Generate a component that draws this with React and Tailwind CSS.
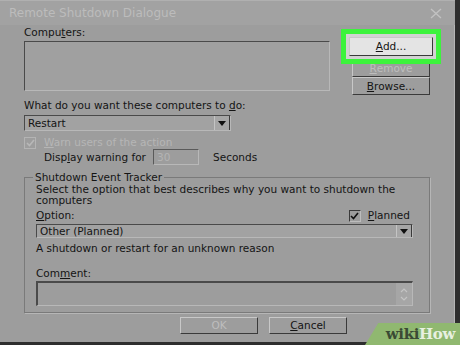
import React from "react";

const font = { fontFamily: '"DejaVu Sans", Verdana, sans-serif' };

function Btn({ children, disabled, className = "" }) {
  return (
    <div
      className={`flex items-center justify-center border border-t-[#c8c8c8] border-l-[#c8c8c8] border-b-[#3a3a3a] border-r-[#3a3a3a] text-[10.5px] ${disabled ? "text-[#bdbdbd]" : "text-[#141414]"} ${className}`}
    >
      {children}
    </div>
  );
}

function Select({ value, className = "" }) {
  return (
    <div className={`flex items-center border border-t-[#4a4a4a] border-l-[#4a4a4a] border-b-[#b8b8b8] border-r-[#b8b8b8] bg-[#a2a2a2] ${className}`}>
      <span className="flex-1 pl-[3px] text-[10.5px] text-[#141414]">{value}</span>
      <div className="flex h-full w-[16px] items-center justify-center border-l border-[#c4c4c4] bg-[#a6a6a6] border-r border-r-[#3a3a3a]">
        <svg width="8" height="5" viewBox="0 0 8 5"><path d="M0 0h8L4 5z" fill="#111" /></svg>
      </div>
    </div>
  );
}

function Check({ disabled }) {
  return (
    <div className={`flex h-[12px] w-[12px] items-center justify-center border ${disabled ? "border-[#b4b4b4]" : "border-t-[#3a3a3a] border-l-[#3a3a3a] border-b-[#bdbdbd] border-r-[#bdbdbd]"}`}>
      <svg width="9" height="8" viewBox="0 0 9 8">
        <path d="M1 4l2.5 2.5L8 1" fill="none" stroke={disabled ? "#b8b8b8" : "#111"} strokeWidth="1.6" />
      </svg>
    </div>
  );
}

export default function App() {
  return (
    <div className="relative h-[345px] w-[460px] overflow-hidden bg-[#2e2e2e] leading-[13px]" style={font}>
      <div className="flex h-[342px] w-[455px] flex-col border-t border-[#b0b0b0] bg-[#9d9d9d]">
        {/* title bar */}
        <div className="flex h-[24px] items-center justify-between bg-[#a2a2a2] pl-[9px] pr-[13px]">
          <span className="text-[12px] text-[#bcbcbc]">Remote Shutdown Dialogue</span>
          <svg width="12" height="11" viewBox="0 0 12 11"><path d="M1 1l10 9M11 1L1 10" stroke="#c2c2c2" strokeWidth="1.4" /></svg>
        </div>

        <div className="flex flex-1 flex-col border-r border-[#b6b6b6] pl-[24px] pr-[6px]">
          {/* computers + buttons */}
          <div className="flex">
            <div className="flex w-[306px] flex-col">
              <span className="mt-[1px] text-[10.5px] text-[#141414]">
                Compu<u>t</u>ers:
              </span>
              <div className="mt-[2px] h-[50px] border border-t-[#4a4a4a] border-l-[#4a4a4a] border-b-[#b8b8b8] border-r-[#b8b8b8] bg-[#a0a0a0]" />
            </div>
            <div className="ml-[11px] flex w-[100px] flex-col">
              <div className="relative z-10 mt-[4px] border-[5px] border-[#3cf33c] bg-[#d2d2d2] px-[3px] py-[3px]">
                <Btn className="h-[19px] bg-[#e4e4e4]">
                  <u>A</u>dd...
                </Btn>
              </div>
              <Btn disabled className="-mt-[4px] ml-[11px] mr-[11px] h-[17px]">
                <u>R</u>emove
              </Btn>
              <Btn className="ml-[11px] mr-[11px] h-[18px]">
                <u>B</u>rowse...
              </Btn>
            </div>
          </div>

          <span className="mt-[4px] text-[10.5px] text-[#141414]">
            What do you want these computers to <u>d</u>o:
          </span>
          <Select value="Restart" className="mt-[3px] h-[16px] w-[207px]" />

          <div className="mt-[5px] flex items-center gap-[8px]">
            <Check disabled />
            <span className="text-[10.5px] text-[#b6b6b6]">
              <u>W</u>arn users of the action
            </span>
          </div>
          <div className="flex items-center pl-[20px]">
            <span className="w-[109px] text-[10.5px] text-[#141414]">
              Disp<u>l</u>ay warning for
            </span>
            <div className="flex h-[16px] w-[46px] items-center border border-t-[#5a5a5a] border-l-[#5a5a5a] border-b-[#b8b8b8] border-r-[#b8b8b8] pl-[3px] text-[10.5px] text-[#b4b4b4]">
              30
            </div>
            <span className="ml-[14px] text-[10.5px] text-[#141414]">Seconds</span>
          </div>

          {/* group box */}
          <div className="relative mt-[12px] flex h-[136px] w-[406px] flex-col border border-[#7a7a7a] pl-[11px] pr-[16px] pt-[6px] shadow-[1px_1px_0_#b6b6b6]">
            <span className="absolute -top-[7px] left-[8px] bg-[#9d9d9d] px-[2px] text-[10.5px] text-[#141414]">
              Shutdown Event Tracker
            </span>
            <p className="text-[10.5px] leading-[11px] text-[#141414]">
              Select the option that best describes why you want to shutdown the computers
            </p>
            <div className="mt-[3px] flex items-center justify-between pr-[3px]">
              <span className="text-[10.5px] text-[#141414]">
                <u>O</u>ption:
              </span>
              <div className="flex items-center gap-[7px]">
                <Check />
                <span className="text-[10.5px] text-[#141414]">
                  <u>P</u>lanned
                </span>
              </div>
            </div>
            <Select value="Other (Planned)" className="mt-[2px] h-[14px] w-[377px]" />
            <span className="mt-[4px] text-[10.5px] text-[#141414]">
              A shutdown or restart for an unknown reason
            </span>
            <span className="mt-[12px] text-[10.5px] text-[#141414]">
              Com<u>m</u>ent:
            </span>
            <div className="mt-[1px] flex h-[25px] w-[377px] justify-end border border-t-2 border-l-2 border-t-[#4a4a4a] border-l-[#4a4a4a] border-b-[#b8b8b8] border-r-[#b8b8b8]">
              <div className="flex w-[16px] flex-col items-center justify-center gap-[3px] bg-[#a6a6a6]">
                <svg width="8" height="5" viewBox="0 0 8 5"><path d="M1 4l3-3 3 3" fill="none" stroke="#c4c4c4" strokeWidth="1.2" /></svg>
                <svg width="8" height="5" viewBox="0 0 8 5"><path d="M1 1l3 3 3-3" fill="none" stroke="#c4c4c4" strokeWidth="1.2" /></svg>
              </div>
            </div>
          </div>

          {/* dialog buttons */}
          <div className="mt-[4px] flex gap-[11px] pl-[156px]">
            <Btn disabled className="h-[17px] w-[78px]">
              OK
            </Btn>
            <Btn className="h-[17px] w-[78px]">
              <u>C</u>ancel
            </Btn>
          </div>
        </div>
      </div>

      {/* wikiHow badge */}
      <div className="absolute bottom-0 right-0 flex h-[22px] w-[95px] items-center justify-end bg-[#90b870] pr-[5px] [clip-path:polygon(14%_0,100%_0,100%_100%,0_100%)]">
        <span className="text-[15px] font-bold tracking-tight" style={{ fontFamily: '"DejaVu Serif", serif' }}>
          <span className="text-[#3a4a34]">wiki</span>
          <span className="text-[#e8f0e0]">How</span>
        </span>
      </div>
    </div>
  );
}
